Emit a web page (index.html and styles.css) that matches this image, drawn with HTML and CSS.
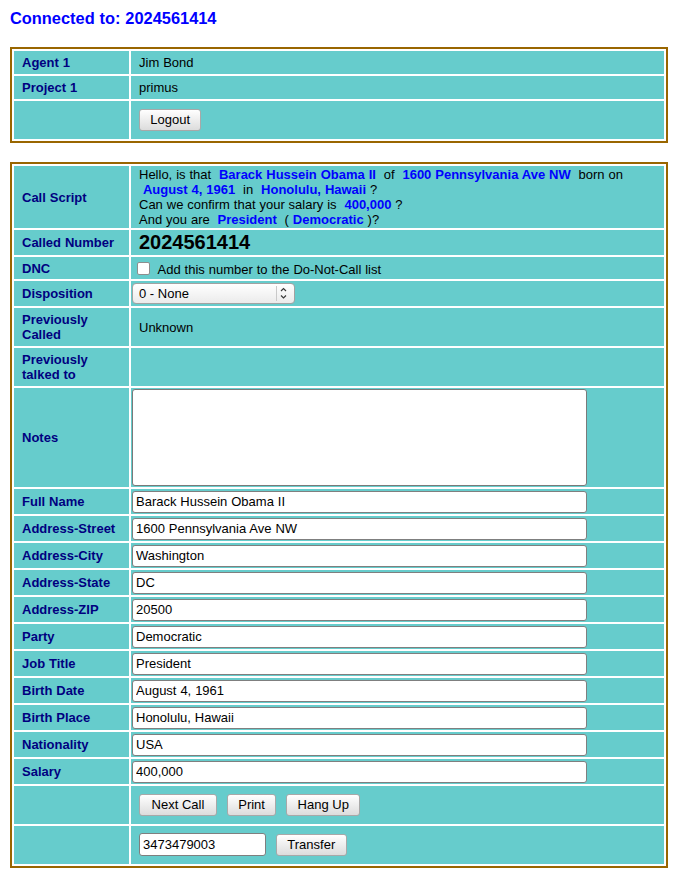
FILE: index.html
```html
<!DOCTYPE html>
<html>
<head>
<meta charset="utf-8">
<title>Connected</title>
<link rel="stylesheet" href="styles.css">
</head>
<body>
<h3 class="title">Connected to: 2024561414</h3>

<table class="panel">
  <tr class="row-s">
    <td class="label">Agent 1</td>
    <td class="value">Jim Bond</td>
  </tr>
  <tr class="row-s">
    <td class="label">Project 1</td>
    <td class="value">primus</td>
  </tr>
  <tr class="row-btn">
    <td class="label"></td>
    <td class="value"><div class="btns"><button class="btn">Logout</button></div></td>
  </tr>
</table>

<table class="panel">
  <tr class="row-script">
    <td class="label">Call Script</td>
    <td class="value script">Hello, is that <b class="v">&nbsp;Barack Hussein Obama II&nbsp;</b> of <b class="v">&nbsp;1600 Pennsylvania Ave NW&nbsp;</b> born on <b class="v">&nbsp;August 4, 1961&nbsp;</b> in <b class="v">&nbsp;Honolulu, Hawaii&nbsp;</b>?<br>Can we confirm that your salary is <b class="v">&nbsp;400,000&nbsp;</b>?<br>And you are <b class="v">&nbsp;President&nbsp;</b> (<b class="v">&nbsp;Democratic&nbsp;</b>)?</td>
  </tr>
  <tr class="row-field">
    <td class="label">Called Number</td>
    <td class="value number">2024561414</td>
  </tr>
  <tr class="row-dnc">
    <td class="label">DNC</td>
    <td class="value top"><label class="dnc"><input type="checkbox" class="check"><span>Add this number to the Do-Not-Call list</span></label></td>
  </tr>
  <tr class="row-field">
    <td class="label">Disposition</td>
    <td class="value tight"><span class="select-wrap"><select class="select"><option>0 - None</option></select><svg class="select-arrow" width="19" height="21" viewBox="0 0 19 21"><line x1="0.5" y1="3" x2="0.5" y2="18" stroke="#c9c9c9" stroke-width="1"/><polyline points="5,8 7.5,5.5 10,8" fill="none" stroke="#3a3a3a" stroke-width="1.2"/><polyline points="5,12.5 7.5,15 10,12.5" fill="none" stroke="#3a3a3a" stroke-width="1.2"/></svg></span></td>
  </tr>
  <tr class="row-two">
    <td class="label">Previously Called</td>
    <td class="value">Unknown</td>
  </tr>
  <tr class="row-two">
    <td class="label">Previously talked to</td>
    <td class="value"></td>
  </tr>
  <tr class="row-notes">
    <td class="label">Notes</td>
    <td class="value tight"><textarea class="notes"></textarea></td>
  </tr>
  <tr class="row-field">
    <td class="label">Full Name</td>
    <td class="value tight"><input class="field" type="text" value="Barack Hussein Obama II"></td>
  </tr>
  <tr class="row-field">
    <td class="label">Address-Street</td>
    <td class="value tight"><input class="field" type="text" value="1600 Pennsylvania Ave NW"></td>
  </tr>
  <tr class="row-field">
    <td class="label">Address-City</td>
    <td class="value tight"><input class="field" type="text" value="Washington"></td>
  </tr>
  <tr class="row-field">
    <td class="label">Address-State</td>
    <td class="value tight"><input class="field" type="text" value="DC"></td>
  </tr>
  <tr class="row-field">
    <td class="label">Address-ZIP</td>
    <td class="value tight"><input class="field" type="text" value="20500"></td>
  </tr>
  <tr class="row-field">
    <td class="label">Party</td>
    <td class="value tight"><input class="field" type="text" value="Democratic"></td>
  </tr>
  <tr class="row-field">
    <td class="label">Job Title</td>
    <td class="value tight"><input class="field" type="text" value="President"></td>
  </tr>
  <tr class="row-field">
    <td class="label">Birth Date</td>
    <td class="value tight"><input class="field" type="text" value="August 4, 1961"></td>
  </tr>
  <tr class="row-field">
    <td class="label">Birth Place</td>
    <td class="value tight"><input class="field" type="text" value="Honolulu, Hawaii"></td>
  </tr>
  <tr class="row-field">
    <td class="label">Nationality</td>
    <td class="value tight"><input class="field" type="text" value="USA"></td>
  </tr>
  <tr class="row-field">
    <td class="label">Salary</td>
    <td class="value tight"><input class="field" type="text" value="400,000"></td>
  </tr>
  <tr class="row-btn">
    <td class="label"></td>
    <td class="value"><div class="btns"><button class="btn btn-next">Next Call</button><button class="btn">Print</button><button class="btn">Hang Up</button></div></td>
  </tr>
  <tr class="row-btn">
    <td class="label"></td>
    <td class="value"><div class="btns"><input class="field field-short" type="text" value="3473479003"><button class="btn">Transfer</button></div></td>
  </tr>
</table>
</body>
</html>
```

FILE: styles.css
```css
* {
  box-sizing: border-box;
}

body {
  margin: 0;
  padding: 9px 10px;
  background: #ffffff;
  color: #000000;
  font-family: "Liberation Sans", Arial, sans-serif;
  font-size: 13px;
  word-spacing: 0.3px;
}

.title {
  margin: 0 0 19px;
  font-size: 16.4px;
  line-height: 19px;
  font-weight: bold;
  color: #0000ff;
}

.panel {
  width: 658px;
  table-layout: fixed;
  border: 2px solid #996600;
  border-collapse: separate;
  border-spacing: 2px;
  background: #ffffff;
  margin: 0 0 19px;
}

.panel td {
  background: #66cccc;
  padding: 0 8px;
  vertical-align: middle;
  line-height: 15px;
}

.panel td.label {
  width: 115px;
  font-weight: bold;
  color: #000080;
}

.panel td.tight {
  padding: 0 1px;
}

.panel td.top {
  vertical-align: top;
  padding: 0;
}

.row-s { height: 23px; }
.row-btn { height: 38px; }
.row-field { height: 25px; }
.row-dnc { height: 22px; }
.row-two { height: 38px; }
.row-script { height: 62px; }
.row-notes { height: 99px; }

.script {
  color: #000000;
}

.v {
  color: #0000ff;
  font-weight: bold;
}

.number {
  font-size: 20px;
  font-weight: bold;
}

.panel td.number {
  line-height: 23px;
}

.dnc {
  display: flex;
  align-items: flex-start;
  padding-top: 5px;
}

.check {
  appearance: none;
  -webkit-appearance: none;
  width: 13px;
  height: 13px;
  margin: 0 8px 0 5.5px;
  border: 1px solid #8e8e8e;
  border-radius: 2px;
  background: #ffffff;
  flex: none;
}

.select-wrap {
  position: relative;
  display: inline-block;
  vertical-align: middle;
}

.select {
  appearance: none;
  -webkit-appearance: none;
  display: block;
  width: 163px;
  height: 21px;
  margin: 0;
  padding: 0 20px 0 6px;
  border: 1px solid #a2a2a2;
  border-radius: 4px;
  background: linear-gradient(#ffffff, #ebebeb);
  color: #000000;
  font-family: "Liberation Sans", Arial, sans-serif;
  font-size: 13px;
}

.select-arrow {
  position: absolute;
  right: 0;
  top: 0;
  pointer-events: none;
}

.notes {
  display: block;
  width: 455px;
  height: 97px;
  margin: 0;
  padding: 2px 3px;
  border: 1px solid #7a7a7a;
  border-radius: 3px;
  background: #ffffff;
  resize: none;
  font-family: "Liberation Sans", Arial, sans-serif;
  font-size: 13px;
}

.field {
  display: block;
  width: 455px;
  height: 22px;
  margin: 0;
  padding: 0 3px;
  border: 1px solid #7f7f7f;
  border-radius: 3px;
  background: #ffffff;
  color: #000000;
  font-family: "Liberation Sans", Arial, sans-serif;
  font-size: 13px;
  word-spacing: 0.3px;
}

.field-short {
  width: 127px;
  height: 23px;
}

.btns {
  display: flex;
  align-items: center;
  gap: 10px;
  margin-top: -1px;
}

.btn {
  height: 22px;
  margin: 0;
  padding: 0 10.3px;
  border: 1px solid #a8a8a8;
  border-radius: 3px;
  background: linear-gradient(#ffffff, #dcdcdc);
  color: #000000;
  font-family: "Liberation Sans", Arial, sans-serif;
  font-size: 13px;
  line-height: 15px;
}

.btn-next {
  padding: 0 11.6px;
}
```
